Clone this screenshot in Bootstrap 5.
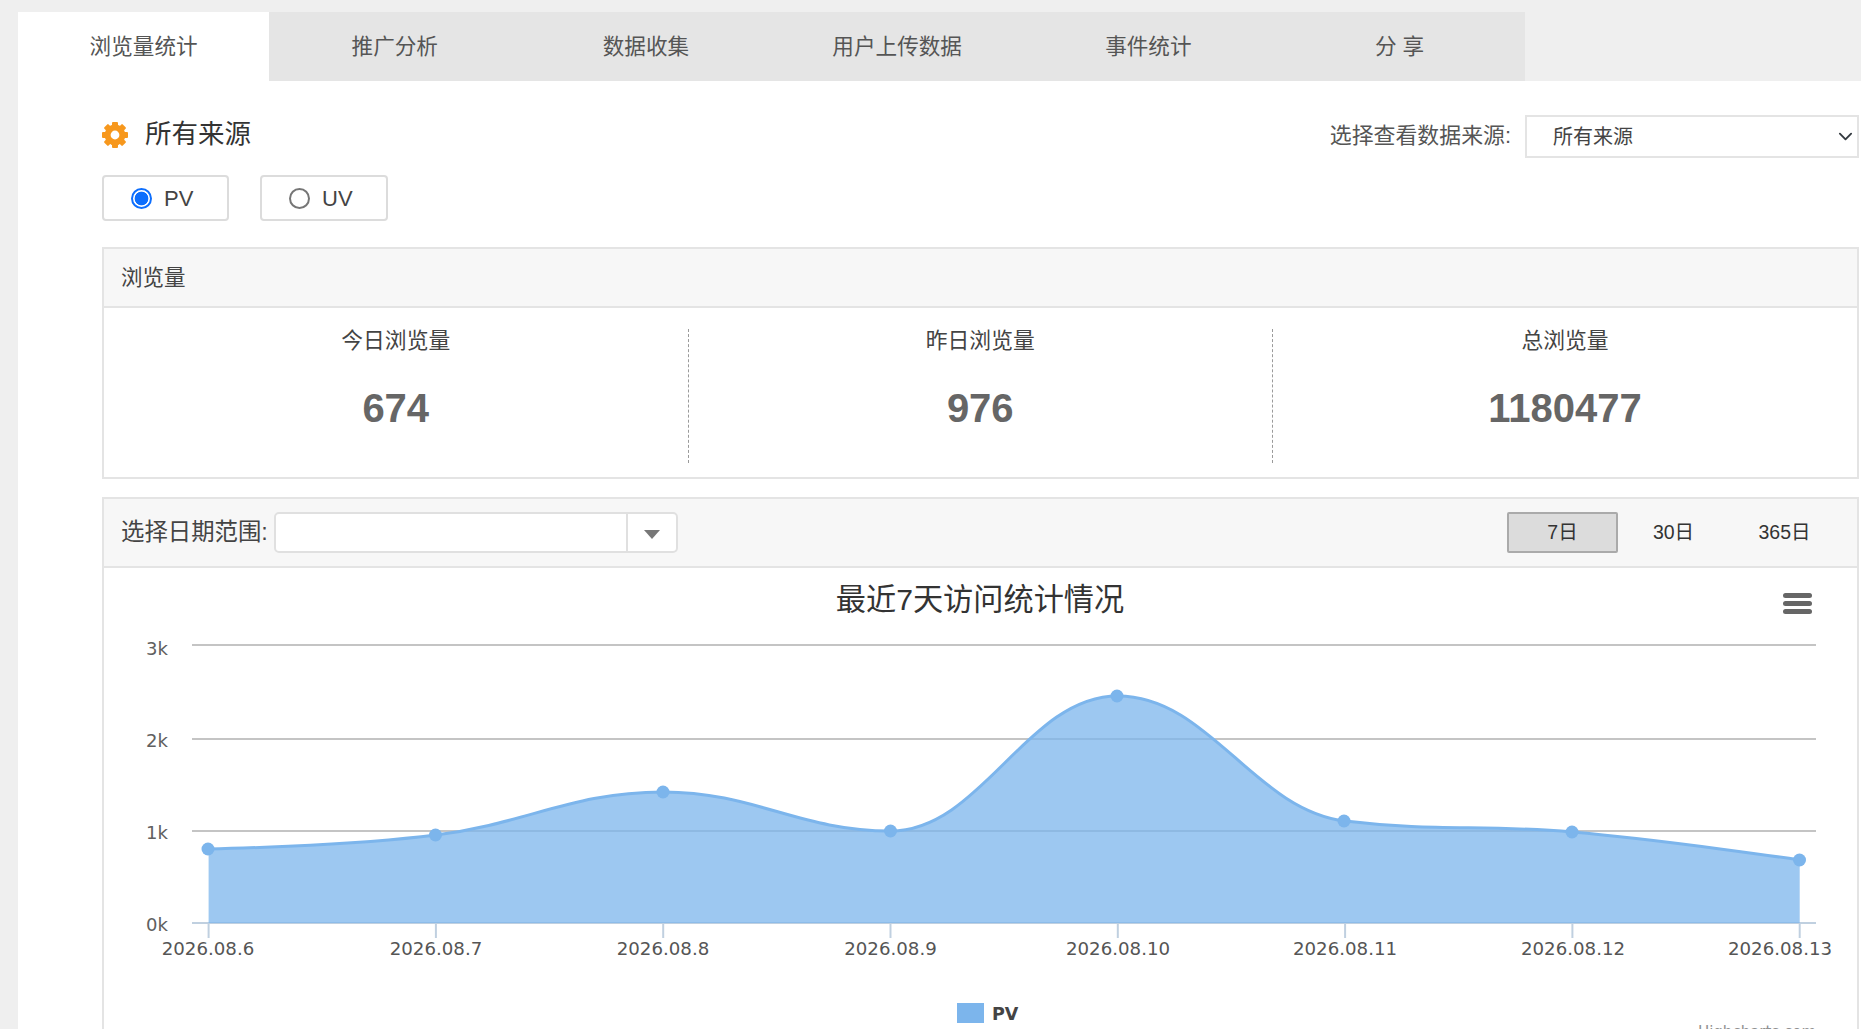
<!DOCTYPE html>
<html lang="zh-CN">
<head>
<meta charset="utf-8">
<title>浏览量统计</title>
<link rel="stylesheet" href="https://cdn.jsdelivr.net/npm/bootstrap@5.3.0/dist/css/bootstrap.min.css">
<style>
html, body { height: 100%; overflow: hidden; }
body { background: #efefef; font-family: "Liberation Sans", "Noto Sans CJK SC", sans-serif; color: #444; }
.shell { margin: 12px 0 0 18px; background: #fff; min-height: 1100px; }
.tabbar { background: #efefef; height: 69px; }
.tabitem { width: 251.2px; height: 69px; padding-top: 2px; background: #e5e5e5; color: #555; font-size: 21.6px; }
.tabitem.on { background: #fff; }
.pane { padding: 34px 2px 0 84px; }
.toprow { height: 43px; }
.gear { width: 26px; height: 26px; }
.srcname { font-size: 26.5px; color: #333; margin-left: 17px; line-height: 1; }
.srclabel { font-size: 21.9px; color: #555; margin-right: 14px; }
.srcselect { width: 334px; height: 43px; border: 2px solid #e4e4e4; border-radius: 0; font-size: 20px; color: #444; padding: 0 30px 0 26px; background-position: right 2px center; background-size: 19px 15px; }
.radiorow { margin-top: 17px; gap: 31px; }
.radiobox { height: 46px; border: 2px solid #dcdcdc; border-radius: 4px; padding-left: 27px; font-size: 22px; color: #444; margin: 0; }
.radiobox.pv { width: 127px; }
.radiobox.uv { width: 128px; }
.radiobox .form-check-input { width: 21px; height: 21px; margin: 0 12px 0 0; float: none; border: 2px solid #767676; }
.radiobox .form-check-input:checked { border-color: #0d6efd; background: radial-gradient(circle, #0d6efd 0 6.5px, #fff 7.2px); }
.statcard { margin-top: 26px; border: 2px solid #e4e4e4; border-radius: 0; }
.chartcard { margin-top: 18px; border: 2px solid #e4e4e4; border-radius: 0; }
.statcard .card-header, .chartcard .card-header { background: #f7f7f7; border-bottom: 2px solid #e4e4e4; border-radius: 0; padding: 0 17px; }
.statcard .card-header { height: 59px; font-size: 21.5px; line-height: 58px; color: #444; }
.statcard .card-body { padding: 21px 0 14px; }
.statcol { height: 134px; padding: 0; text-align: center; border-right: 1px dashed #9a9a9a; width: 584.5px; flex: none; }
.statcol:last-child { border-right: 0; flex: 1; }
.statname { font-size: 21.8px; line-height: 25px; color: #444; margin-top: -1px; }
.statnum { font-size: 40px; font-weight: 700; color: #666; line-height: 46px; margin-top: 32px; }
.chartcard .card-header { height: 69px; }
.rangelabel { font-size: 23.4px; color: #444; margin-right: 6px; }
.rangebox { width: 404px; height: 41px; border: 2px solid #e0e0e0; border-radius: 5px; background: #fff; }
.rangebox .rangefield { flex: 1; }
.rangebox .rangecaret { width: 50px; height: 100%; border-left: 2px solid #e0e0e0; }
.caretshape { width: 0; height: 0; border-left: 8px solid transparent; border-right: 8px solid transparent; border-top: 9px solid #777; margin-top: 4px; }
.daybtn { width: 111px; height: 41px; padding: 1px 0 0; font-size: 19.5px; color: #333; border: 2px solid transparent; border-radius: 2px; background: transparent; }
.daybtn.on { background: #dcdcdc; border-color: #aaa; }
.chartcard .card-body { padding: 0; }
.plot { display: block; width: 100%; height: 500px; }
.plot text { font-family: "DejaVu Sans", "Noto Sans CJK SC", sans-serif; }
</style>
</head>
<body>
<div class="shell">
  <div class="tabbar d-flex">
    <div class="tabitem on d-flex align-items-center justify-content-center">浏览量统计</div>
    <div class="tabitem d-flex align-items-center justify-content-center">推广分析</div>
    <div class="tabitem d-flex align-items-center justify-content-center">数据收集</div>
    <div class="tabitem d-flex align-items-center justify-content-center">用户上传数据</div>
    <div class="tabitem d-flex align-items-center justify-content-center">事件统计</div>
    <div class="tabitem d-flex align-items-center justify-content-center">分&nbsp;享</div>
  </div>
  <div class="pane">
    <div class="toprow d-flex align-items-center justify-content-between">
      <div class="d-flex align-items-center pb-1">
        <svg class="gear" viewBox="0 0 26 26" aria-hidden="true">
          <g fill="#f7981d">
            <rect x="10" y="0" width="6" height="26" rx="1"/>
            <rect x="10" y="0" width="6" height="26" rx="1" transform="rotate(45 13 13)"/>
            <rect x="10" y="0" width="6" height="26" rx="1" transform="rotate(90 13 13)"/>
            <rect x="10" y="0" width="6" height="26" rx="1" transform="rotate(135 13 13)"/>
          </g>
          <circle cx="13" cy="13" r="7.4" fill="none" stroke="#f7981d" stroke-width="6"/>
          <circle cx="13" cy="13" r="4.4" fill="#fff"/>
        </svg>
        <span class="srcname">所有来源</span>
      </div>
      <div class="d-flex align-items-center">
        <span class="srclabel">选择查看数据来源:</span>
        <select class="form-select srcselect"><option>所有来源</option></select>
      </div>
    </div>
    <div class="radiorow d-flex">
      <label class="radiobox pv d-flex align-items-center"><input class="form-check-input" type="radio" name="metric" checked>PV</label>
      <label class="radiobox uv d-flex align-items-center"><input class="form-check-input" type="radio" name="metric">UV</label>
    </div>
    <div class="card statcard">
      <div class="card-header">浏览量</div>
      <div class="card-body">
        <div class="d-flex">
          <div class="statcol"><div class="statname">今日浏览量</div><div class="statnum">674</div></div>
          <div class="statcol"><div class="statname">昨日浏览量</div><div class="statnum">976</div></div>
          <div class="statcol"><div class="statname">总浏览量</div><div class="statnum">1180477</div></div>
        </div>
      </div>
    </div>
    <div class="card chartcard">
      <div class="card-header d-flex align-items-center justify-content-between">
        <div class="d-flex align-items-center">
          <span class="rangelabel">选择日期范围:</span>
          <div class="rangebox d-flex align-items-center">
            <div class="rangefield"></div>
            <div class="rangecaret d-flex align-items-center justify-content-center"><span class="caretshape"></span></div>
          </div>
        </div>
        <div class="d-flex">
          <button type="button" class="btn daybtn on">7日</button>
          <button type="button" class="btn daybtn">30日</button>
          <button type="button" class="btn daybtn">365日</button>
        </div>
      </div>
      <div class="card-body">
        <svg class="plot" viewBox="104 568 1753 500" preserveAspectRatio="xMinYMin meet">
          <text x="980" y="610" text-anchor="middle" font-size="30.2" fill="#333" style="font-family:'Liberation Sans','Noto Sans CJK SC',sans-serif">最近7天访问统计情况</text>
          <g fill="#666">
            <rect x="1783" y="593" width="29" height="5" rx="2.5"/>
            <rect x="1783" y="601" width="29" height="5" rx="2.5"/>
            <rect x="1783" y="609" width="29" height="5" rx="2.5"/>
          </g>
          <g stroke="#c4c4c4" stroke-width="2">
            <line x1="192" x2="1816" y1="645" y2="645"/>
            <line x1="192" x2="1816" y1="739" y2="739"/>
            <line x1="192" x2="1816" y1="831" y2="831"/>
          </g>
          <g stroke="#c0d0e0" stroke-width="2">
            <line x1="192" x2="1816" y1="923" y2="923"/>
            <line x1="208.6" x2="208.6" y1="923" y2="938"/>
            <line x1="435.9" x2="435.9" y1="923" y2="938"/>
            <line x1="663.2" x2="663.2" y1="923" y2="938"/>
            <line x1="890.5" x2="890.5" y1="923" y2="938"/>
            <line x1="1117.8" x2="1117.8" y1="923" y2="938"/>
            <line x1="1345.1" x2="1345.1" y1="923" y2="938"/>
            <line x1="1572.4" x2="1572.4" y1="923" y2="938"/>
            <line x1="1799.7" x2="1799.7" y1="923" y2="938"/>
          </g>
          <g font-size="18" fill="#606060" text-anchor="end">
            <text x="168" y="655">3k</text>
            <text x="168" y="747">2k</text>
            <text x="168" y="839">1k</text>
            <text x="168" y="931">0k</text>
          </g>
          <path fill="#7cb5ec" fill-opacity=".75" d="M208.6 849C208.6 849 345 846.4 435.9 835C526.8 823.6 572.3 792 663.2 792C754.1 792 799.6 831 890.5 831C981.4 831 1026.9 696 1117.8 696C1208.7 696 1254.2 810 1345.1 821C1436 832 1481.5 824.2 1572.4 832C1663.3 839.8 1799.7 860 1799.7 860L1799.7 923L208.6 923Z"/>
          <path fill="none" stroke="#7cb5ec" stroke-width="3" d="M208.6 849C208.6 849 345 846.4 435.9 835C526.8 823.6 572.3 792 663.2 792C754.1 792 799.6 831 890.5 831C981.4 831 1026.9 696 1117.8 696C1208.7 696 1254.2 810 1345.1 821C1436 832 1481.5 824.2 1572.4 832C1663.3 839.8 1799.7 860 1799.7 860"/>
          <g fill="#7cb5ec">
            <circle cx="208" cy="849" r="6.5"/>
            <circle cx="435.5" cy="835" r="6.5"/>
            <circle cx="663" cy="792" r="6.5"/>
            <circle cx="890.5" cy="831" r="6.5"/>
            <circle cx="1117" cy="696" r="6.5"/>
            <circle cx="1344" cy="821" r="6.5"/>
            <circle cx="1572" cy="832" r="6.5"/>
            <circle cx="1799.5" cy="860" r="6.5"/>
          </g>
          <g font-size="18.2" fill="#555" text-anchor="middle">
            <text x="208" y="955">2026.08.6</text>
            <text x="436" y="955">2026.08.7</text>
            <text x="663" y="955">2026.08.8</text>
            <text x="890.5" y="955">2026.08.9</text>
            <text x="1118" y="955">2026.08.10</text>
            <text x="1345" y="955">2026.08.11</text>
            <text x="1573" y="955">2026.08.12</text>
            <text x="1780" y="955">2026.08.13</text>
          </g>
          <rect x="957" y="1003" width="27" height="20" fill="#7cb5ec"/>
          <text x="992" y="1020" font-size="17.5" font-weight="700" fill="#444">PV</text>
          <text x="1816" y="1037" font-size="15" fill="#909090" text-anchor="end">Highcharts.com</text>
        </svg>
      </div>
    </div>
  </div>
</div>
<script src="https://cdn.jsdelivr.net/npm/bootstrap@5.3.0/dist/js/bootstrap.bundle.min.js"></script>
</body>
</html>
